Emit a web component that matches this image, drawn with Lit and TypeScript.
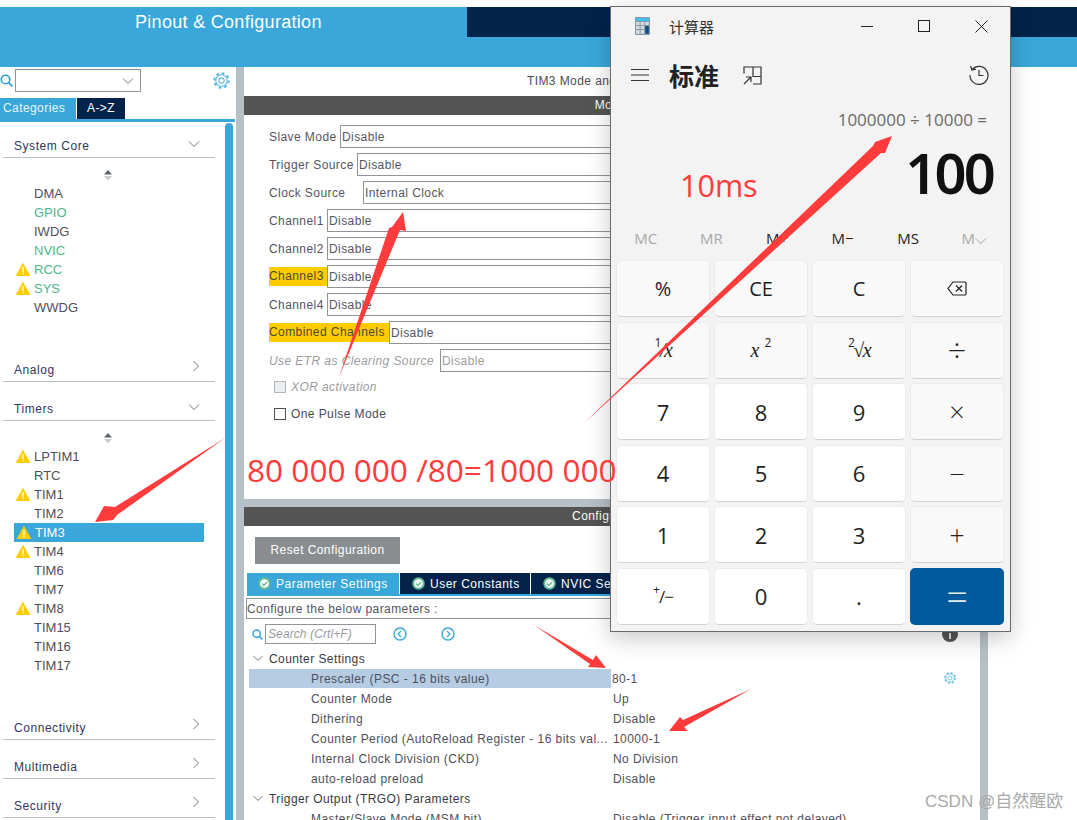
import { LitElement, html, css, svg } from "lit";
import { customElement } from "lit/decorators.js";

const warn = html`<svg class="warn" width="14" height="13" viewBox="0 0 14 13"><path d="M7 0.5 L13.6 12.5 H0.4 Z" fill="#ffcc00" stroke="#ffcc00" stroke-linejoin="round"/><rect x="6.3" y="4" width="1.4" height="5" fill="#fff"/><rect x="6.3" y="9.8" width="1.4" height="1.5" fill="#fff"/></svg>`;
const chevD = html`<svg class="chev" width="12" height="8" viewBox="0 0 12 8"><path d="M1 1.5 L6 6.5 L11 1.5" fill="none" stroke="#6d7780" stroke-width="1"/></svg>`;
const chevR = html`<svg class="chev" width="8" height="12" viewBox="0 0 8 12"><path d="M1.5 1 L6.5 6 L1.5 11" fill="none" stroke="#6d7780" stroke-width="1"/></svg>`;
const spin = html`<svg class="spin" width="10" height="11" viewBox="0 0 10 11"><path d="M5 0 L9 4.5 H1 Z" fill="#5e6469"/><path d="M1 6 H9 L5 10.5 Z" fill="#c9cdd0"/></svg>`;
const gear = (s: number) => html`<svg width=${s} height=${s} viewBox="0 0 16 16"><circle cx="8" cy="8" r="6.8" fill="none" stroke="#5cb8e2" stroke-width="2" stroke-dasharray="2.6 2.74"/><circle cx="8" cy="8" r="5.4" fill="#fff" stroke="#5cb8e2" stroke-width="1"/><circle cx="8" cy="8" r="2.5" fill="none" stroke="#5cb8e2" stroke-width="1"/></svg>`;
const lens = (s: number) => html`<svg width=${s} height=${s} viewBox="0 0 13 13"><circle cx="5.5" cy="5.5" r="4.3" fill="none" stroke="#2b9fd6" stroke-width="1.6"/><path d="M8.6 8.6 L12.3 12.3" stroke="#2b9fd6" stroke-width="1.8"/></svg>`;
const ok = html`<svg class="ok" width="13" height="13" viewBox="0 0 13 13"><circle cx="6.5" cy="6.5" r="5.3" fill="#fff" stroke="#62bb92" stroke-width="1.9"/><path d="M3.9 6.6 L5.8 8.4 L9.1 4.9" fill="none" stroke="#62bb92" stroke-width="1.4"/></svg>`;
const nav = (d: string) => html`<svg width="14" height="14" viewBox="0 0 14 14"><circle cx="7" cy="7" r="6" fill="none" stroke="#39a7da" stroke-width="1.4"/><path d=${d} fill="none" stroke="#39a7da" stroke-width="1.3"/></svg>`;

const sys = [["DMA", ""], ["GPIO", "g"], ["IWDG", ""], ["NVIC", "g"], ["RCC", "gw"], ["SYS", "gw"], ["WWDG", ""]];
const tim = [["LPTIM1", "w"], ["RTC", ""], ["TIM1", "w"], ["TIM2", ""], ["TIM3", "ws"], ["TIM4", "w"], ["TIM6", ""], ["TIM7", ""], ["TIM8", "w"], ["TIM15", ""], ["TIM16", ""], ["TIM17", ""]];

const modeRows: [string, number, string, string][] = [
  ["Slave Mode", 71, "Disable", ""],
  ["Trigger Source", 88, "Disable", ""],
  ["Clock Source", 94, "Internal Clock", ""],
  ["Channel1", 58, "Disable", ""],
  ["Channel2", 58, "Disable", ""],
  ["Channel3", 58, "Disable", "hl"],
  ["Channel4", 58, "Disable", ""],
  ["Combined Channels", 120, "Disable", "hl"],
  ["Use ETR as Clearing Source", 171, "Disable", "dis"],
];

const params: [string, string, string][] = [
  ["h", "Counter Settings", ""],
  ["s", "Prescaler (PSC - 16 bits value)", "80-1"],
  ["r", "Counter Mode", "Up"],
  ["r", "Dithering", "Disable"],
  ["r", "Counter Period (AutoReload Register - 16 bits val...", "10000-1"],
  ["r", "Internal Clock Division (CKD)", "No Division"],
  ["r", "auto-reload preload", "Disable"],
  ["h", "Trigger Output (TRGO) Parameters", ""],
  ["r", "Master/Slave Mode (MSM bit)", "Disable (Trigger input effect not delayed)"],
];

const arrows = [
  "M225 438 L115 507 L104 506 L95 522 L113 520 L117 515 Z",
  "M339 377 L389 228 L392 227 L403 212 L406 231 L400 230 Z",
  "M583 424 L873 146 L875 142 L892 136 L885 153 L881 153 Z",
  "M534 625 L593 660 L596 655 L606 668 L588 667 L590 664 Z",
  "M751 689 L683 720 L680 717 L669 731 L688 731 L684 727 Z",
];

const keys: [string, string][] = [
  ["%", "f"], ["CE", "f"], ["C", "f"], ["bk", "f"],
  ["inv", "f"], ["sq", "f"], ["rt", "f"], ["÷", "f o big"],
  ["7", "d"], ["8", "d"], ["9", "d"], ["×", "f o"],
  ["4", "d"], ["5", "d"], ["6", "d"], ["−", "f o"],
  ["1", "d"], ["2", "d"], ["3", "d"], ["+", "f o"],
  ["pm", "d"], ["0", "d"], [".", "d"], ["=", "eq"],
];

@customElement("app-root")
export class AppRoot extends LitElement {
  static styles = css`
    :host { display: block; width: 1077px; height: 820px; position: relative; overflow: hidden; background: #fff;
      font-family: "Liberation Sans", Arial, sans-serif; font-size: 12px; letter-spacing: .42px; color: #4b4b57; }
    svg { display: block; flex: none; }
    .top { height: 60px; margin-top: 7px; background: #39a7da; display: flex; align-items: flex-start; }
    .top .t1 { width: 466px; height: 30px; box-sizing: border-box; padding: 5px 0 0 135px; color: #fff; font-size: 18px; letter-spacing: .3px; line-height: 21px; }
    .top .t2 { flex: 1; height: 30px; margin-left: 1px; background: #03234b; }
    .main { display: flex; height: 753px; }
    .side { width: 236px; flex: none; display: flex; flex-direction: column; }
    .sr { height: 31px; display: flex; align-items: flex-start; padding-top: 2px; box-sizing: border-box; }
    .sr .lens { width: 15px; padding-top: 5px; }
    .combo { width: 126px; height: 23px; box-sizing: border-box; border: 1px solid #8f9498; display: flex; align-items: center; justify-content: flex-end; padding-right: 6px; }
    .sr .g { margin: 3px 0 0 72px; }
    .stabs { display: flex; height: 24px; box-sizing: border-box; border-bottom: 3px solid #39a7da; width: 235px; }
    .stabs div { height: 21px; line-height: 21px; color: #fff; box-sizing: border-box; }
    .stabs .a { width: 76px; background: #39a7da; padding-left: 3px; color: #e8f5fb; }
    .stabs .b { width: 48px; margin-left: 1px; background: #03234b; text-align: center; }
    .sbody { flex: 1; display: flex; min-height: 0; }
    .list { width: 225px; flex: none; }
    .scroll { width: 8px; background: #39a7da; border-radius: 5px 5px 0 0; margin-top: 1px; }
    .head { height: 35px; margin: 0 10px 0 3px; border-bottom: 1px solid #b5c0c7; display: flex; align-items: flex-end; justify-content: space-between; padding: 0 15px 0 11px; color: #33365a; line-height: 21px; font-size: 12px; letter-spacing: .55px; }
    .head.n { height: 38px; }
    .head .chev { margin-bottom: 9px; }
    .body { box-sizing: border-box; padding-top: 12px; }
    .spinw { height: 14px; display: flex; justify-content: center; width: 216px; }
    .item { height: 19px; margin-left: 14px; width: 190px; display: flex; align-items: center; line-height: 19px; letter-spacing: 0; font-size: 13px; color: #4f4f59; padding-left: 2px; box-sizing: border-box; }
    .item .slot { width: 18px; flex: none; }
    .item.g { color: #4db88c; }
    .item.s { background: #39a7da; color: #fff; padding-left: 3px; }
    .gap { width: 8px; flex: none; background: #b5c0c7; }
    .panel { width: 736px; flex: none; display: flex; flex-direction: column; }
    .p1 { height: 432px; box-sizing: border-box; flex: none; }
    .ttl { height: 29px; line-height: 28px; text-align: center; }
    .bar { height: 19px; background: #535453; color: #fff; text-align: center; line-height: 19px; padding-right: 3px; }
    .rows { padding: 10px 20px 0 25px; display: flex; flex-direction: column; gap: 5px; }
    .row { height: 23px; display: flex; align-items: center; }
    .lab { flex: none; height: 19px; line-height: 21px; white-space: nowrap; color: #55555f; }
    .lab.hl span { background: #ffcc00; display: block; width: fit-content; padding-right: 4px; height: 19px; line-height: 19px; color: #4a4a30; }
    .lab.dis { font-style: italic; color: #9b9ba2; }
    .inp { flex: 1; height: 23px; box-sizing: border-box; border: 1px solid #8f9498; line-height: 22px; padding-left: 1px; color: #55555f; }
    .inp.dis { color: #9b9ba2; }
    .chk { display: flex; align-items: center; gap: 5px; padding-left: 30px; height: 27px; }
    .chk i { width: 12px; height: 12px; box-sizing: border-box; border: 1px solid #555; display: block; }
    .chk.dis i { background: #eceff1; border-color: #b5b8bb; }
    .chk.dis { color: #9b9ba2; font-style: italic; }
    .chks { margin-top: 1px; }
    .sep { height: 8px; flex: none; background: #b5c0c7; }
    .p2 { flex: 1; min-height: 0; overflow: hidden; }
    .reset { width: 145px; height: 27px; margin: 11px 0 0 11px; background: #898d90; color: #fff; text-align: center; line-height: 27px; }
    .ptabs { display: flex; gap: 1px; margin: 9px 0 0 3px; border-bottom: 2px solid #39a7da; height: 21px; }
    .ptabs div { background: #03234b; color: #fff; display: flex; align-items: center; gap: 5px; box-sizing: border-box; padding-left: 11px; height: 21px; letter-spacing: .5px; }
    .ptabs .on { background: #39a7da; width: 152px; }
    .ptabs .u { width: 130px; padding-left: 12px; }
    .ptabs .nv { width: 200px; padding-left: 12px; }
    .conf { margin: 2px 20px 0 2px; height: 21px; box-sizing: border-box; border: 1px solid #8f9498; line-height: 20px; color: #55555f; }
    .srch { display: flex; align-items: center; height: 20px; margin-top: 5px; padding-left: 8px; }
    .srch .in { width: 111px; height: 20px; box-sizing: border-box; border: 1px solid #8f9498; margin-left: 2px; font-style: italic; color: #9b9ba2; line-height: 18px; padding-left: 2px; letter-spacing: .1px; }
    .srch .nv1 { margin-left: 17px; }
    .srch .nv2 { margin-left: 34px; }
    .srch .info { margin-left: 487px; }
    .tree { margin-top: 4px; }
    .tr { height: 20px; display: flex; align-items: center; margin-left: 5px; position: relative; white-space: nowrap; color: #4f4f59; line-height: 20px; }
    .tr .nm { width: 362px; flex: none; box-sizing: border-box; padding-left: 62px; height: 19px; line-height: 20px; letter-spacing: .45px; }
    .tr .v { padding-left: 2px; padding-top: 1px; }
    .tr.s .nm { background: #b5cce3; }
    .tr.s .v { padding-left: 1px; }
    .tr.h { color: #3a3a44; padding-top: 1px; box-sizing: border-box; }
    .tr.h .ar { margin: 0 6px 0 4px; }
    .tr .g2 { position: absolute; left: 695px; top: 4px; }
    .calc { position: absolute; left: 610px; top: 6px; width: 401px; height: 626px; box-sizing: border-box; border: 1px solid #6b6b6b; background: #f3f3f3; box-shadow: 0 6px 22px rgba(0,0,0,.22); z-index: 1;
      font-family: "Open Sans", "Noto Sans CJK SC", sans-serif; letter-spacing: 0; color: #1b1b1b; display: flex; flex-direction: column; }
    .tb { height: 38px; display: flex; align-items: center; flex: none; }
    .tb .ic { margin-left: 24px; }
    .tb .nm { margin-left: 19px; font-family: "Noto Sans CJK SC", sans-serif; font-size: 15px; color: #333; flex: 1; }
    .tb .bs { display: flex; align-items: center; margin-right: 22px; gap: 45px; }
    .hd { height: 40px; margin-top: 10px; display: flex; align-items: center; flex: none; }
    .hd .ham { margin-left: 20px; }
    .hd .nm { margin-left: 20px; font-family: "Noto Sans CJK SC", sans-serif; font-size: 25px; font-weight: 700; color: #222; width: 74px; line-height: 30px; }
    .hd .hist { margin-left: 207px; }
    .expr { text-align: right; padding-right: 23px; font-size: 17px; color: #6a6a6a; line-height: 24px; margin-top: 13px; flex: none; }
    .res { text-align: right; padding-right: 17px; font-size: 56px; font-weight: 600; color: #111; line-height: 70px; margin-top: 5px; letter-spacing: -2.8px; flex: none; font-family: "Noto Sans", sans-serif; }
    .mem { display: flex; padding-left: 2px; margin-top: 11px; height: 40px; flex: none; }
    .mem div { width: 65.6px; flex: none; text-align: center; line-height: 40px; font-size: 15px; color: #1f1f1f; }
    .mem .off { color: #a8a8a8; }
    .grid { display: grid; grid-template-columns: repeat(4, 94px); grid-template-rows: repeat(6, 57px); column-gap: 4px; row-gap: 4.6px; padding: 0 5px; margin-top: 2px; }
    .k { box-sizing: border-box; border: 1px solid #ececec; border-bottom: 1px solid #d2d2d2; border-radius: 5px; display: flex; align-items: center; justify-content: center; font-size: 20px; color: #1f1f1f; }
    .k.d { background: #fff; font-size: 22px; }
    .k.f { background: #f9f9f9; font-size: 20px; }
    .k.o { font-size: 27px; font-weight: 300; }
    .k.big { font-size: 33px; }
    .k.eq { background: #005a9e; color: #e8f0f8; font-size: 38px; border: none; font-weight: 300; }
    .mt { font-family: "Liberation Serif", serif; font-style: italic; font-size: 20px; }
    .mt.tight { letter-spacing: -1.5px; }
    .k sup { font-size: 12px; font-style: normal; line-height: 0; font-family: "Open Sans", sans-serif; position: relative; top: -2px; }
    .pm { font-size: 17px; letter-spacing: -1px; }
    .over { position: absolute; left: 0; top: 0; z-index: 2; pointer-events: none; }
    .note { position: absolute; z-index: 3; color: #ff3b3b; font-family: "Open Sans", sans-serif; letter-spacing: 0; line-height: 40px; white-space: nowrap; }
    .note1 { left: 247px; top: 450px; font-size: 31.6px; }
    .note2 { left: 680px; top: 165px; font-size: 30.5px; }
    .mark { position: absolute; left: 925px; top: 791px; z-index: 3; color: #a9a9a9; font-family: "Liberation Sans", "Noto Sans CJK SC", sans-serif; font-size: 17px; letter-spacing: 0; line-height: 22px; white-space: nowrap; }
  `;

  key(k: string) {
    if (k === "bk") return html`<svg width="20" height="15" viewBox="0 0 20 15"><path d="M6 1 H18 Q19 1 19 2 V13 Q19 14 18 14 H6 L1 7.5 Z" fill="none" stroke="#222" stroke-width="1.2"/><path d="M9 4.5 L15 10.5 M15 4.5 L9 10.5" stroke="#222" stroke-width="1.2"/></svg>`;
    if (k === "inv") return html`<span class="mt tight"><sup>1</sup>/x</span>`;
    if (k === "sq") return html`<span class="mt">x <sup>2</sup></span>`;
    if (k === "rt") return html`<span class="mt tight"><sup>2</sup>√x</span>`;
    if (k === "pm") return html`<span class="pm"><sup>+</sup>/−</span>`;
    return k;
  }

  items(list: string[][]) {
    return html`<div class="spinw">${spin}</div>
      ${list.map(([n, c]) => html`<div class="item ${c.includes("g") ? "g" : ""} ${c.includes("s") ? "s" : ""}"><span class="slot">${c.includes("w") ? warn : ""}</span>${n}</div>`)}`;
  }

  render() {
    return html`
      <div class="top"><div class="t1">Pinout &amp; Configuration</div><div class="t2"></div></div>
      <div class="main">
        <div class="side">
          <div class="sr"><span class="lens">${lens(13)}</span><div class="combo">${chevD}</div><span class="g">${gear(17)}</span></div>
          <div class="stabs"><div class="a">Categories</div><div class="b">A-&gt;Z</div></div>
          <div class="sbody">
            <div class="list">
              <div class="head">System Core${chevD}</div>
              <div class="body" style="height:185px">${this.items(sys)}</div>
              <div class="head n">Analog${chevR}</div>
              <div class="head n">Timers${chevD}</div>
              <div class="body" style="height:280px">${this.items(tim)}</div>
              <div class="head n">Connectivity${chevR}</div>
              <div class="head n">Multimedia${chevR}</div>
              <div class="head n">Security${chevR}</div>
            </div>
            <div class="scroll"></div>
          </div>
        </div>
        <div class="gap"></div>
        <div class="panel">
          <div class="p1">
            <div class="ttl">TIM3 Mode and Configuration</div>
            <div class="bar">Mode</div>
            <div class="rows">
              ${modeRows.map(([l, w, v, c]) => html`<div class="row"><div class="lab ${c}" style="width:${w}px"><span>${l}</span></div><div class="inp ${c === "dis" ? "dis" : ""}">${v}</div></div>`)}
            </div>
            <div class="chks">
              <div class="chk dis"><i></i>XOR activation</div>
              <div class="chk"><i></i>One Pulse Mode</div>
            </div>
          </div>
          <div class="sep"></div>
          <div class="p2">
            <div class="bar">Configuration</div>
            <div class="reset">Reset Configuration</div>
            <div class="ptabs"><div class="on">${ok}Parameter Settings</div><div class="u">${ok}User Constants</div><div class="nv">${ok}NVIC Settings</div></div>
            <div class="conf">Configure the below parameters :</div>
            <div class="srch">${lens(11)}<div class="in">Search (Crtl+F)</div><span class="nv1">${nav("M8 4 L5 7 L8 10")}</span><span class="nv2">${nav("M6 4 L9 7 L6 10")}</span>
              <svg class="info" width="16" height="16" viewBox="0 0 16 16"><circle cx="8" cy="8" r="8" fill="#555"/><rect x="7.2" y="7" width="1.6" height="6" fill="#fff"/></svg></div>
            <div class="tree">
              ${params.map(([t, n, v]) => t === "h"
                ? html`<div class="tr h"><svg class="ar" width="10" height="7" viewBox="0 0 10 7"><path d="M0.5 1 L5 5.5 L9.5 1" fill="none" stroke="#6d7780"/></svg>${n}</div>`
                : html`<div class="tr ${t === "s" ? "s" : ""}"><div class="nm">${n}</div><div class="v">${v}</div>${t === "s" ? html`<span class="g2">${gear(12)}</span>` : ""}</div>`)}
            </div>
          </div>
        </div>
        <div class="gap"></div>
      </div>

      <div class="calc">
        <div class="tb">
          <svg class="ic" width="15" height="18" viewBox="0 0 15 18"><rect width="15" height="18" rx="1" fill="#8d97a3"/><rect x="1" y="1" width="13" height="3" fill="#3cc0ee"/><g fill="#d5dbe2"><rect x="1" y="5" width="3.6" height="3"/><rect x="5.6" y="5" width="3.6" height="3"/><rect x="10.2" y="5" width="3.6" height="3"/><rect x="1" y="9" width="3.6" height="3"/><rect x="5.6" y="9" width="3.6" height="3"/><rect x="1" y="13" width="3.6" height="3.8"/><rect x="5.6" y="13" width="3.6" height="3.8"/></g><rect x="10.2" y="9" width="3.6" height="7.8" fill="#0f4c8a"/></svg>
          <span class="nm">计算器</span>
          <div class="bs">
            <svg width="12" height="12" viewBox="0 0 12 12"><path d="M0 6.5 H12" stroke="#222" stroke-width="1"/></svg>
            <svg width="12" height="12" viewBox="0 0 12 12"><rect x=".5" y=".5" width="11" height="11" fill="none" stroke="#222"/></svg>
            <svg width="13" height="13" viewBox="0 0 13 13"><path d="M.5 .5 L12.5 12.5 M12.5 .5 L.5 12.5" stroke="#222"/></svg>
          </div>
        </div>
        <div class="hd">
          <svg class="ham" width="18" height="12" viewBox="0 0 18 12"><path d="M0 .5 H18 M0 6 H18 M0 11.5 H18" stroke="#333" stroke-width="1.1"/></svg>
          <span class="nm">标准</span>
          <svg width="19" height="19" viewBox="0 0 19 19"><path d="M1 7.5 V1 H18 V18 H10 M10 1 V10.5 H18" fill="none" stroke="#333" stroke-width="1.2"/><path d="M1 18 L8 11 M3 11 H8 V16" fill="none" stroke="#333" stroke-width="1.2"/></svg>
          <svg class="hist" width="20" height="20" viewBox="0 0 20 20"><path d="M3.2 4.5 A9 9 0 1 1 1 10" fill="none" stroke="#333" stroke-width="1.2"/><path d="M1.5 1 L3 5 L7 4.2" fill="none" stroke="#333" stroke-width="1.2"/><path d="M10 5 V10.5 H14.5" fill="none" stroke="#333" stroke-width="1.2"/></svg>
        </div>
        <div class="expr">1000000 ÷ 10000 =</div>
        <div class="res">100</div>
        <div class="mem"><div class="off">MC</div><div class="off">MR</div><div>M+</div><div>M−</div><div>MS</div><div class="off">M⌵</div></div>
        <div class="grid">${keys.map(([k, c]) => html`<div class="k ${c}">${this.key(k)}</div>`)}</div>
      </div>

      <svg class="over" width="1077" height="820" viewBox="0 0 1077 820">${arrows.map((d) => svg`<path d=${d} fill="#ff3b3b"/>`)}</svg>
      <div class="note note1">80 000 000 /80=1000 000</div>
      <div class="note note2">10ms</div>
      <div class="mark">CSDN @自然醒欧</div>
    `;
  }
}
